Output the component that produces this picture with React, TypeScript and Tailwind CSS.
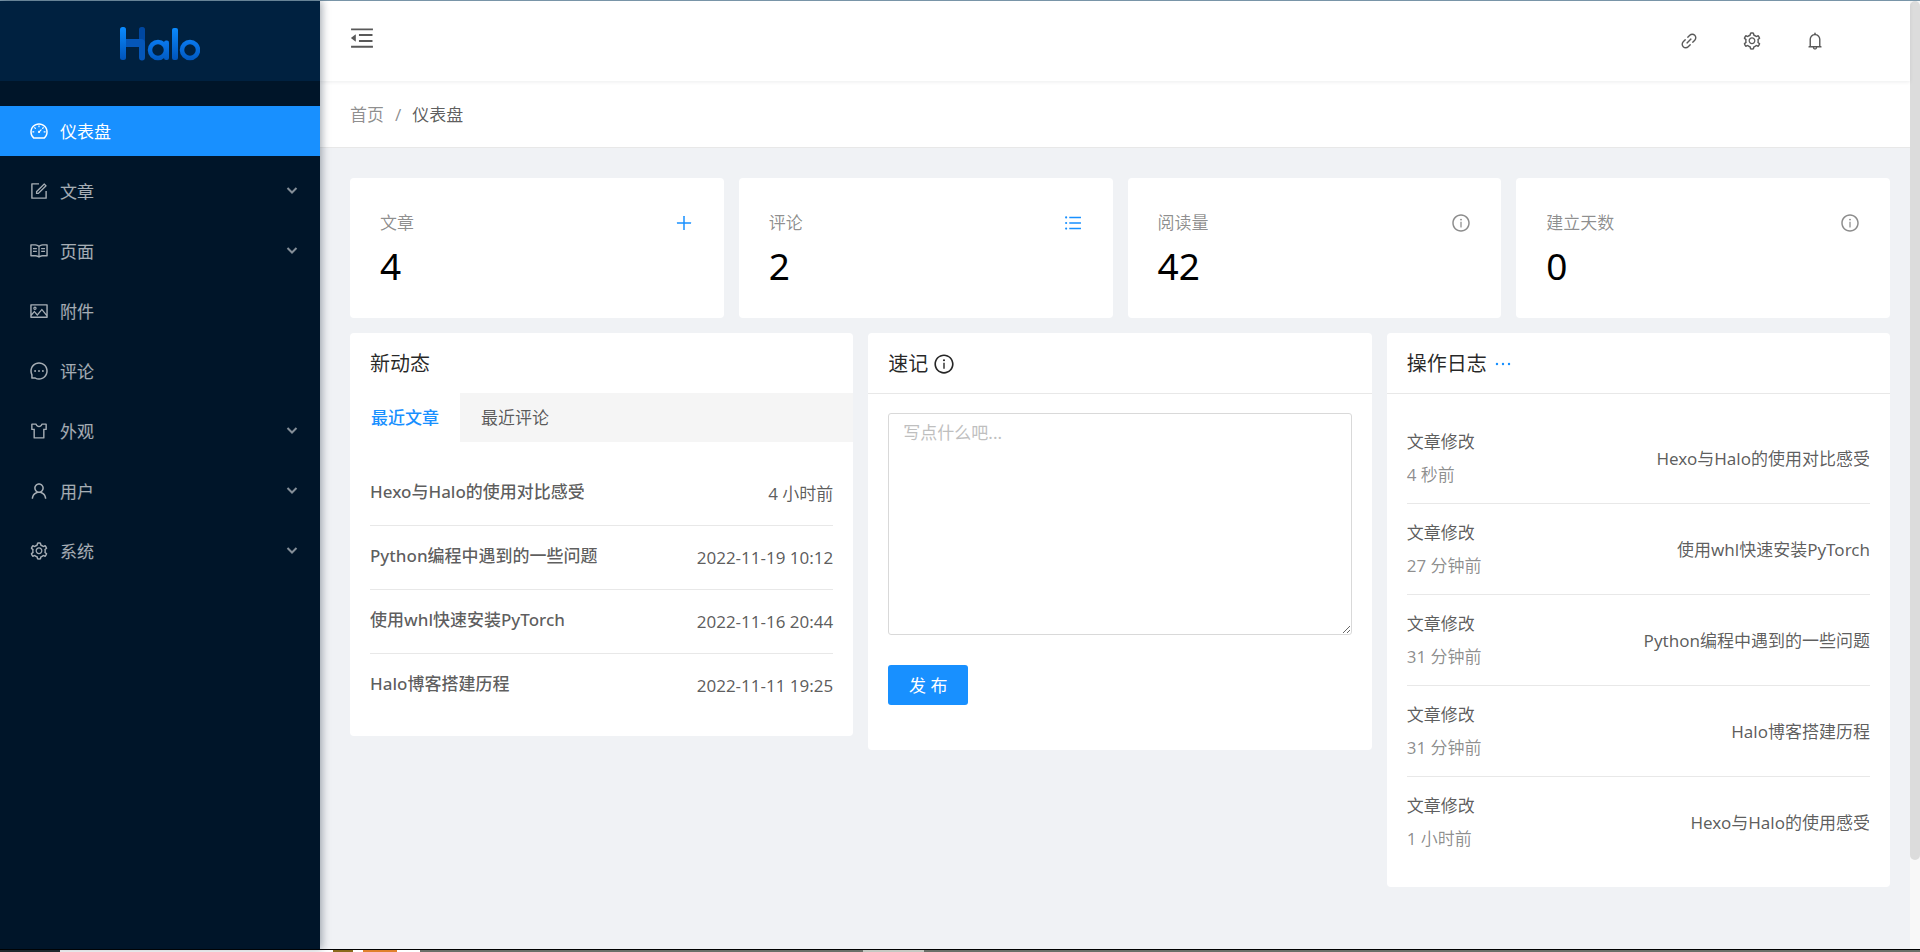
import type { ReactNode } from "react";
import type { IconType } from "react-icons";
import {
  AiOutlineBell,
  AiOutlineDashboard,
  AiOutlineEllipsis,
  AiOutlineForm,
  AiOutlineInfoCircle,
  AiOutlineLink,
  AiOutlineMenuFold,
  AiOutlineMessage,
  AiOutlinePicture,
  AiOutlinePlus,
  AiOutlineRead,
  AiOutlineSetting,
  AiOutlineSkin,
  AiOutlineUnorderedList,
  AiOutlineUser,
} from "react-icons/ai";

type MenuEntry = { label: string; Icon: IconType; active?: boolean; nested?: boolean };

const menu: MenuEntry[] = [
  { label: "仪表盘", Icon: AiOutlineDashboard, active: true },
  { label: "文章", Icon: AiOutlineForm, nested: true },
  { label: "页面", Icon: AiOutlineRead, nested: true },
  { label: "附件", Icon: AiOutlinePicture },
  { label: "评论", Icon: AiOutlineMessage },
  { label: "外观", Icon: AiOutlineSkin, nested: true },
  { label: "用户", Icon: AiOutlineUser, nested: true },
  { label: "系统", Icon: AiOutlineSetting, nested: true },
];

const stats = [
  { label: "文章", value: 4, Icon: AiOutlinePlus, link: true },
  { label: "评论", value: 2, Icon: AiOutlineUnorderedList, link: true },
  { label: "阅读量", value: 42, Icon: AiOutlineInfoCircle, link: false },
  { label: "建立天数", value: 0, Icon: AiOutlineInfoCircle, link: false },
];

const posts = [
  { title: "Hexo与Halo的使用对比感受", time: "4 小时前" },
  { title: "Python编程中遇到的一些问题", time: "2022-11-19 10:12" },
  { title: "使用whl快速安装PyTorch", time: "2022-11-16 20:44" },
  { title: "Halo博客搭建历程", time: "2022-11-11 19:25" },
];

const logs = [
  { time: "4 秒前", target: "Hexo与Halo的使用对比感受" },
  { time: "27 分钟前", target: "使用whl快速安装PyTorch" },
  { time: "31 分钟前", target: "Python编程中遇到的一些问题" },
  { time: "31 分钟前", target: "Halo博客搭建历程" },
  { time: "1 小时前", target: "Hexo与Halo的使用感受" },
];

function Logo() {
  return (
    <svg width="80" height="34" viewBox="0 0 80 34" fill="none" role="img" aria-label="Halo">
      <defs>
        <linearGradient id="bar" x1="0" y1="0" x2="0" y2="34" gradientUnits="userSpaceOnUse">
          <stop stopColor="#0a8bff" />
          <stop offset="1" stopColor="#0052b8" />
        </linearGradient>
        <linearGradient id="ring" x1="0" y1="13" x2="0" y2="34" gradientUnits="userSpaceOnUse">
          <stop stopColor="#0a7af0" />
          <stop offset="1" stopColor="#0058c0" />
        </linearGradient>
      </defs>
      <rect x="19" y="0" width="6" height="18" rx="2.5" fill="#0047a0" />
      <path d="M4 12h17a4 4 0 0 1 4 4v14.500a2.500 2.500 0 0 1-6 0V20H4z" fill="#0556b8" />
      <rect x="0" y="0" width="6" height="33" rx="2.500" fill="url(#bar)" />
      <circle cx="38" cy="23" r="8" stroke="url(#ring)" strokeWidth="4.500" />
      <rect x="44" y="13.500" width="5" height="19.500" rx="2" fill="url(#ring)" />
      <rect x="52" y="1" width="6" height="32" rx="2" fill="url(#bar)" />
      <circle cx="70" cy="23" r="8" stroke="url(#ring)" strokeWidth="4.500" />
    </svg>
  );
}

function Sidebar() {
  return (
    <aside className="relative z-20 w-80 shrink-0 bg-[#001529] shadow-[2px_0_8px_rgba(0,21,41,0.35)]">
      <a href="#home" className="flex h-20 items-center justify-center bg-[#002140] pt-2.5 pb-1">
        <Logo />
      </a>
      <nav className="mt-[25px] flex flex-col gap-2.5">
        {menu.map(({ label, Icon, active, nested }) => (
          <a
            key={label}
            href={"#" + label}
            className={
              active
                ? "flex h-[50px] items-center gap-[11px] bg-[#1890ff] pr-[22px] pl-[29px] text-white"
                : "flex h-[50px] items-center gap-[11px] pr-[22px] pl-[29px] text-white/65"
            }
          >
            <Icon className="size-5" />
            <span className="grow">{label}</span>
            {nested && (
              <svg width="12" height="10" viewBox="0 0 12 10" fill="none" stroke="currentColor" strokeWidth="2" className="opacity-80">
                <path d="M1.500 2L6 6.500l4.500-4.500" />
              </svg>
            )}
          </a>
        ))}
      </nav>
    </aside>
  );
}

function TopBar() {
  return (
    <header className="relative z-10 flex h-20 items-center justify-between bg-white pr-[85px] pl-7 shadow-[0_1px_4px_rgba(0,21,41,0.08)]">
      <button type="button" aria-label="收起菜单" className="pb-1.5">
        <AiOutlineMenuFold className="size-7" />
      </button>
      <div className="flex gap-[43px]">
        <a href="#site" aria-label="浏览站点"><AiOutlineLink className="size-5" /></a>
        <button type="button" aria-label="设置"><AiOutlineSetting className="size-5" /></button>
        <button type="button" aria-label="通知"><AiOutlineBell className="size-5" /></button>
      </div>
    </header>
  );
}

function Card({ title, extra, divided = true, children }: { title: string; extra?: ReactNode; divided?: boolean; children: ReactNode }) {
  return (
    <section className="rounded-sm bg-white">
      <div className={divided ? "border-b border-[#e8e8e8] px-5" : "px-5"}>
        <h2 className="flex h-[60px] items-center gap-[5px] pt-0.5 text-xl text-black/85">
          {title}
          {extra}
        </h2>
      </div>
      {children}
    </section>
  );
}

function Recent() {
  return (
    <Card title="新动态" divided={false}>
      <div role="tablist" className="flex h-[49px] bg-[#f5f5f5]">
        <button type="button" role="tab" aria-selected="true" className="bg-white px-[21px] font-medium text-[#1890ff]">最近文章</button>
        <button type="button" role="tab" aria-selected="false" className="px-[21px]">最近评论</button>
      </div>
      <ul className="divide-y divide-[#e8e8e8] px-5 pt-5 pb-[19px]">
        {posts.map((post) => (
          <li key={post.title} className="flex items-center justify-between">
            <a href="#post" className="pt-4 pb-5 font-medium">{post.title}</a>
            <span>{post.time}</span>
          </li>
        ))}
      </ul>
    </Card>
  );
}

function QuickNote() {
  return (
    <Card title="速记" extra={<AiOutlineInfoCircle className="size-[22px]" />}>
      <form className="px-5 pt-[19px] pb-[45px]">
        <textarea
          aria-label="速记内容"
          placeholder="写点什么吧..."
          className="block h-[222px] w-full resize-y rounded-[3px] border border-[#d9d9d9] px-3.5 py-[5px] placeholder:text-[#bfbfbf]"
        />
        <button type="button" className="mt-[30px] block h-10 w-20 rounded-[3px] bg-[#1890ff] text-white">发 布</button>
      </form>
    </Card>
  );
}

function ActivityLog() {
  return (
    <Card
      title="操作日志"
      extra={<button type="button" aria-label="更多" className="text-[#1890ff]"><AiOutlineEllipsis className="size-[22px]" /></button>}
    >
      <ul className="divide-y divide-[#e8e8e8] px-5 pt-[19px] pb-5">
        {logs.map((log, i) => (
          <li key={i} className="flex items-center justify-between py-[15px]">
            <div className="flex flex-col gap-1.5">
              <span>文章修改</span>
              <span className="text-black/45">{log.time}</span>
            </div>
            <span>{log.target}</span>
          </li>
        ))}
      </ul>
    </Card>
  );
}

export default function App() {
  return (
    <div className="flex min-h-screen flex-col bg-[#f0f2f5] font-['Noto_Sans','Noto_Sans_CJK_SC',sans-serif] text-[17px] leading-[27px] text-black/65">
      <div className="h-px bg-[#7b98ab]" />
      <div className="flex grow">
        <Sidebar />
        <div className="min-w-0 grow">
          <TopBar />
          <nav aria-label="面包屑" className="flex h-[67px] items-center gap-[11px] border-b border-[#e8e8e8] bg-white px-[30px]">
            <a href="#home" className="text-black/45">首页</a>
            <span className="text-black/45">/</span>
            <span>仪表盘</span>
          </nav>
          <main className="flex flex-col gap-[15px] px-5 pt-[30px] pb-5 pl-[30px]">
            <div className="grid grid-cols-4 gap-[15px]">
              {stats.map(({ label, value, Icon, link }) => (
                <section key={label} className="h-[140px] rounded-sm bg-white px-[30px] pt-[31px]">
                  <div className="flex items-center justify-between text-black/45">
                    <h2>{label}</h2>
                    {link ? (
                      <a href={"#" + label} aria-label={label} className="text-[#1890ff]"><Icon className="size-5" /></a>
                    ) : (
                      <Icon className="size-5" />
                    )}
                  </div>
                  <p className="mt-1.5 text-[37px] leading-[48px] text-black">{value}</p>
                </section>
              ))}
            </div>
            <div className="grid grid-cols-3 items-start gap-[15px]">
              <Recent />
              <QuickNote />
              <ActivityLog />
            </div>
          </main>
        </div>
        <div aria-hidden="true" className="flex w-2.5 shrink-0 flex-col bg-[#f8f8f8]">
          <div className="grow-[29] rounded-full bg-[#dcdcdc]" />
          <div className="grow-[3]" />
        </div>
      </div>
      <div aria-hidden="true" className="flex h-[3px] border-t border-black bg-[#6b6f69]">
        <div className="w-[60px] bg-[#242c30]" />
        <div className="w-[273px] bg-white" />
        <div className="w-5 bg-[#8a6a1c]" />
        <div className="w-2.5 bg-white" />
        <div className="w-[34px] bg-[#e0812c]" />
        <div className="w-[23px] bg-white" />
        <div className="w-[443px]" />
        <div className="w-[61px] bg-[#c5c8c2]" />
      </div>
    </div>
  );
}
